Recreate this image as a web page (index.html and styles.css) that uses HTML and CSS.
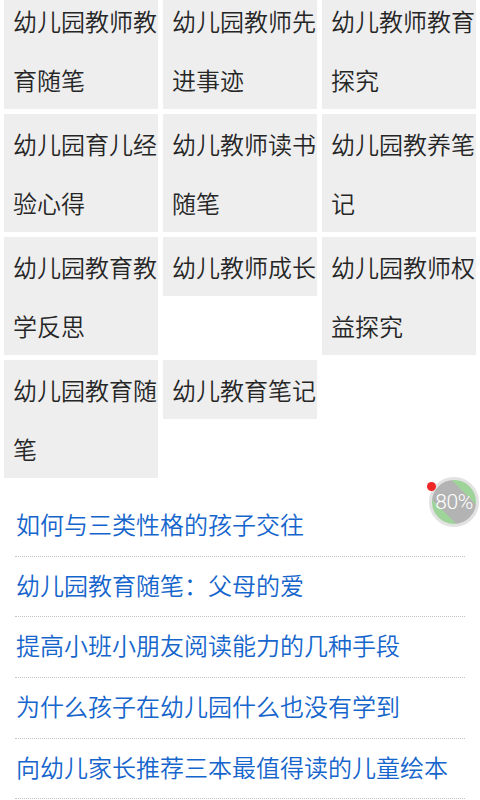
FILE: index.html
```html
<!DOCTYPE html>
<html lang="zh-CN">
<head>
    <meta charset="UTF-8">
    <meta name="viewport" content="width=device-width, initial-scale=1.0">
    <title>幼儿园教师</title>

    <link rel="stylesheet" href="styles.css">
</head>
<body>
    <div class="category-grid">
        <a class="category" href="#">幼儿园教师教育随笔</a>
        <a class="category" href="#">幼儿园教师先进事迹</a>
        <a class="category" href="#">幼儿教师教育探究</a>
        <a class="category" href="#">幼儿园育儿经验心得</a>
        <a class="category" href="#">幼儿教师读书随笔</a>
        <a class="category" href="#">幼儿园教养笔记</a>
        <a class="category" href="#">幼儿园教育教学反思</a>
        <a class="category" href="#">幼儿教师成长</a>
        <a class="category" href="#">幼儿园教师权益探究</a>
        <a class="category" href="#">幼儿园教育随笔</a>
        <a class="category" href="#">幼儿教育笔记</a>
    </div>

    <ul class="article-list">
        <li><a href="#">如何与三类性格的孩子交往</a></li>
        <li><a href="#">幼儿园教育随笔：父母的爱</a></li>
        <li><a href="#">提高小班小朋友阅读能力的几种手段</a></li>
        <li><a href="#">为什么孩子在幼儿园什么也没有学到</a></li>
        <li><a href="#">向幼儿家长推荐三本最值得读的儿童绘本</a></li>
    </ul>

    <div class="speed-ball">
        <span class="dot"></span>
        <span class="percent">80%</span>
    </div>
</body>
</html>
```

FILE: styles.css
```css
* {
    margin: 0;
    padding: 0;
    box-sizing: border-box;
}

body {
    font-family: "Noto Sans CJK SC", "Noto Sans", sans-serif;
    font-weight: 350;
    background: #fff;
    overflow: hidden;
}

a {
    text-decoration: none;
}

.category-grid {
    display: grid;
    grid-template-columns: repeat(3, 1fr);
    align-items: start;
    gap: 5px;
    padding: 0 4px;
    margin-top: -9px;
}

.category {
    display: block;
    background: #eeeeee;
    color: #262626;
    font-size: 24px;
    line-height: 59px;
    padding-left: 9px;
    word-break: break-all;
}

.article-list {
    list-style: none;
    margin: 18px 15px 0;
}

.article-list li {
    border-bottom: 1px dotted #c4c4c4;
}

.article-list a {
    display: block;
    color: #1565cc;
    font-size: 24px;
    line-height: 56px;
    padding: 0 0 3.7px 1px;
    white-space: nowrap;
}

/* floating speed ball */
.speed-ball {
    position: absolute;
    left: 429px;
    top: 477px;
    width: 50px;
    height: 50px;
    border-radius: 50%;
    border: 3px solid #e2e2e2;
    background: linear-gradient(45deg, #9ed39a 0%, #9ed39a 28%, #b3b3b3 28%, #b3b3b3 72%, #9ed39a 72%, #9ed39a 100%);
    display: flex;
    align-items: center;
    justify-content: center;
}

.speed-ball .percent {
    color: #fff;
    font-family: "Roboto", "Noto Sans", sans-serif;
    font-weight: 300;
    font-size: 21px;
    letter-spacing: -0.5px;
}

.speed-ball .dot {
    position: absolute;
    left: -5px;
    top: 2px;
    width: 9px;
    height: 9px;
    border-radius: 50%;
    background: #f02525;
}
```
